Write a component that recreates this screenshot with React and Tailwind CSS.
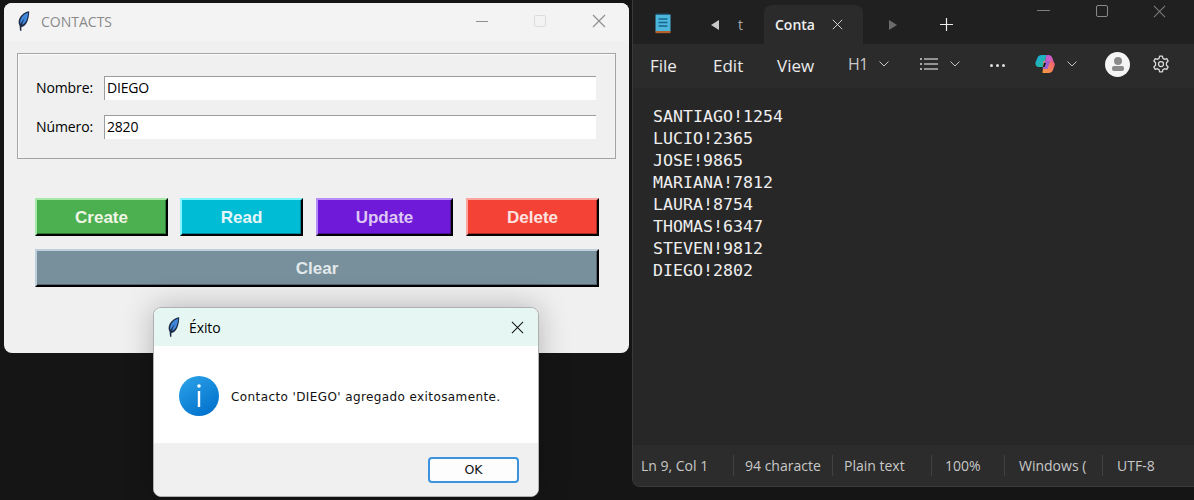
import { useState } from "react";

const ui = "font-['Open_Sans','Noto_Sans',sans-serif]";

function Feather({ className }) {
  return (
    <svg className={className} viewBox="0 0 12 20" width="12" height="20">
      <path d="M11.2 0.2 C7.4 0.6 3.2 3.6 1.4 7.6 C0.4 10 0.2 12.6 1.6 14.8 L2 19.8 L3.4 19.8 L3.4 16 C6 15.6 8.2 13.4 9.4 10.4 C10.6 7.4 11.3 3.6 11.2 0.2 Z" fill="#1c2a44" />
      <path d="M10.2 1.6 C7.4 2.4 4.2 4.8 2.8 8 C2 10 1.9 11.6 2.4 13 L6.8 6.6 L3.8 13.8 C5.8 13.4 7.5 11.6 8.5 9.2 C9.5 6.8 10.1 4 10.2 1.6 Z" fill="#4088de" />
    </svg>
  );
}

function CloseIcon({ size = 14, color = "#000", width = 1.1, className = "" }) {
  return (
    <svg className={className} viewBox="0 0 14 14" width={size} height={size} fill="none" stroke={color} strokeWidth={width}>
      <path d="M1 1 L13 13 M13 1 L1 13" />
    </svg>
  );
}

function Chevron({ className = "" }) {
  return (
    <svg className={className} viewBox="0 0 10 6" width="10" height="6" fill="none" stroke="#c4c4c4" strokeWidth="1">
      <path d="M0.5 0.5 L5 5 L9.5 0.5" />
    </svg>
  );
}

function BevelButton({ label, className }) {
  return (
    <button className={`h-[38px] pt-[1px] border-2 border-r-black border-b-black font-['Liberation_Sans',Arial,sans-serif] font-bold text-[17px] ${className}`}>
      {label}
    </button>
  );
}

function ContactsWindow() {
  const [nombre, setNombre] = useState("DIEGO");
  const [numero, setNumero] = useState("2820");

  return (
    <div className={`absolute left-[4px] top-[3px] w-[625px] h-[350px] rounded-lg bg-[#f0f0f0] overflow-hidden ${ui}`}>
      <div className="h-[38px] bg-[#f3f3f3] flex items-center pl-[14px] pb-[2px]">
        <Feather />
        <span className="ml-[11px] text-[14px] text-[#8a8a8a]">CONTACTS</span>
        <div className="ml-auto flex items-center">
          <div className="w-[12px] h-px bg-[#8f8f8f] mr-[46px]"></div>
          <div className="w-[12px] h-[12px] rounded-[2px] border border-[#dcdcdc] mr-[46px]"></div>
          <CloseIcon size={14} color="#8c8c8c" className="mr-[23px]" />
        </div>
      </div>

      <div className="px-[13px] pt-[12px]">
        <div className="w-[599px] h-[106px] border border-[#a4a4a4] shadow-[inset_1px_1px_0_#fbfbfb] pl-[18px] pr-[19px] pt-[22px] flex flex-col gap-[15px]">
          <div className="flex items-center h-[24px]">
            <label className="w-[68px] pb-[2px] text-[14px] text-[#000] tracking-[-0.1px]">Nombre:</label>
            <input
              className="flex-1 min-w-0 h-[24px] pb-[2px] bg-white border-t border-l border-t-[#9c9c9c] border-l-[#9c9c9c] pl-[2px] text-[14px] text-[#000] tracking-[-0.2px] outline-none"
              value={nombre}
              onChange={(e) => setNombre(e.target.value)}
            />
          </div>
          <div className="flex items-center h-[24px]">
            <label className="w-[68px] pb-[2px] text-[14px] text-[#000] tracking-[-0.1px]">Número:</label>
            <input
              className="flex-1 min-w-0 h-[24px] pb-[2px] bg-white border-t border-l border-t-[#9c9c9c] border-l-[#9c9c9c] pl-[2px] text-[14px] text-[#000] tracking-[-0.2px] outline-none"
              value={numero}
              onChange={(e) => setNumero(e.target.value)}
            />
          </div>
        </div>

        <div className="mt-[39px] ml-[18px] w-[564px]">
          <div className="flex">
            <BevelButton label="Create" className="w-[133px] bg-[#4caf50] text-[#f1f5e6] border-t-[#a5e8a7] border-l-[#a5e8a7] shadow-[inset_-1px_-1px_0_#2f7a33]" />
            <BevelButton label="Read" className="w-[123px] ml-[12px] bg-[#00bcd4] text-[#e6f6f8] border-t-[#80f4ff] border-l-[#80f4ff] shadow-[inset_-1px_-1px_0_#00829a]" />
            <BevelButton label="Update" className="w-[137px] ml-[13px] bg-[#6f1ad8] text-[#dcc8f5] border-t-[#b88cf8] border-l-[#b88cf8] shadow-[inset_-1px_-1px_0_#4b1296]" />
            <BevelButton label="Delete" className="w-[133px] ml-[13px] bg-[#f44336] text-[#fde4e0] border-t-[#fca59e] border-l-[#fca59e] shadow-[inset_-1px_-1px_0_#a82c22]" />
          </div>
          <BevelButton label="Clear" className="w-full mt-[13px] bg-[#78909c] text-[#e3e8ea] border-t-[#bfd0dc] border-l-[#bfd0dc] shadow-[inset_-1px_-1px_0_#52646d]" />
        </div>
      </div>
    </div>
  );
}

function InfoIcon() {
  return (
    <svg viewBox="0 0 40 40" width="40" height="40">
      <defs>
        <linearGradient id="infoFill" x1="0.2" y1="0" x2="0.8" y2="1">
          <stop offset="0" stopColor="#2aa0e6" />
          <stop offset="1" stopColor="#0070cc" />
        </linearGradient>
      </defs>
      <circle cx="20" cy="20" r="20" fill="url(#infoFill)" />
      <circle cx="20" cy="10" r="1.8" fill="#fff" />
      <rect x="18.8" y="15" width="2.4" height="16" fill="#fff" />
    </svg>
  );
}

function ExitoDialog() {
  return (
    <div className={`absolute left-[153px] top-[307px] w-[386px] h-[190px] rounded-lg border border-[#b0b0b0] overflow-hidden bg-white shadow-[0_0_30px_rgba(0,0,0,0.25)] ${ui} flex flex-col`}>
      <div className="h-[38px] bg-[#e6f7f3] flex items-center pl-[14px] shrink-0">
        <Feather />
        <span className="ml-[9px] text-[14px] text-[#000] tracking-[-0.1px]">Éxito</span>
        <CloseIcon size={13} color="#111" className="ml-auto mr-[14px]" />
      </div>
      <div className="h-[97px] flex items-center pl-[25px] pt-[2px] shrink-0">
        <InfoIcon />
        <span className="ml-[12px] mt-[3px] font-['DejaVu_Sans',sans-serif] text-[12px] tracking-[0.4px] text-[#111]">
          Contacto 'DIEGO' agregado exitosamente.
        </span>
      </div>
      <div className="flex-1 bg-[#f0f0f0] flex justify-end pt-[14px] pr-[19px]">
        <button className="w-[91px] h-[26px] rounded-[4px] bg-[#fdfdfd] border-2 border-[#3a93dc] font-['DejaVu_Sans',sans-serif] text-[12.5px] text-[#111]">
          OK
        </button>
      </div>
    </div>
  );
}

function NotepadIcon() {
  return (
    <svg viewBox="0 0 16 21" width="16" height="21">
      <rect x="0.5" y="1.5" width="15" height="17" fill="#4cb6dd" />
      <rect x="0.5" y="18" width="15" height="2.2" fill="#b4622a" />
      <path d="M2 1 H14" stroke="#155b7d" strokeWidth="1.4" strokeDasharray="1.2 1.2" />
      <path d="M3.5 6 H12.5 M3.5 9.5 H12.5 M3.5 13 H12.5" stroke="#17658a" strokeWidth="1.6" />
    </svg>
  );
}

function CopilotIcon() {
  return (
    <svg viewBox="0 0 20 20" width="20" height="20">
      <defs>
        <linearGradient id="copA" x1="0" y1="0" x2="1" y2="1">
          <stop offset="0" stopColor="#1aa8e8" />
          <stop offset="1" stopColor="#28c08a" />
        </linearGradient>
        <linearGradient id="copB" x1="0" y1="0" x2="1" y2="1">
          <stop offset="0" stopColor="#b45be0" />
          <stop offset="1" stopColor="#f0609a" />
        </linearGradient>
        <linearGradient id="copC" x1="0" y1="1" x2="1" y2="0">
          <stop offset="0" stopColor="#f9a03c" />
          <stop offset="1" stopColor="#ef5a7a" />
        </linearGradient>
      </defs>
      <path d="M6.5 1 H11.5 L8.5 13 H4 C1.5 13 0 11 0.5 8.5 L2.5 3.5 C3 2 4.8 1 6.5 1 Z" fill="url(#copA)" />
      <path d="M8.5 7 H16 C18.5 7 20.3 9 19.6 11.5 L18 16 C17.5 18 15.5 19 13.5 19 H7.5 Z" fill="url(#copC)" />
      <path d="M11.5 1 H13.5 C15.5 1 17 2.5 17.4 4 L19.5 10.5 C19 8 17 7 15.5 7 H10 Z" fill="url(#copB)" />
      <path d="M10 7 H15 L12.5 15 H8 Z" fill="#8a5ce8" opacity="0.85" />
      <path d="M9 9 H11 L9.5 13 H8 Z" fill="#111" />
    </svg>
  );
}

function GearIcon() {
  return (
    <svg viewBox="0 0 24 24" width="20" height="20" fill="none" stroke="#dcdcdc" strokeWidth="1.5" strokeLinejoin="round">
      <path d="M10.3 2.5 H13.7 L14.3 5.3 C15 5.6 15.6 5.9 16.2 6.4 L18.9 5.5 L20.6 8.5 L18.5 10.4 C18.6 11.2 18.6 12.8 18.5 13.6 L20.6 15.5 L18.9 18.5 L16.2 17.6 C15.6 18.1 15 18.4 14.3 18.7 L13.7 21.5 H10.3 L9.7 18.7 C9 18.4 8.4 18.1 7.8 17.6 L5.1 18.5 L3.4 15.5 L5.5 13.6 C5.4 12.8 5.4 11.2 5.5 10.4 L3.4 8.5 L5.1 5.5 L7.8 6.4 C8.4 5.9 9 5.6 9.7 5.3 Z" />
      <circle cx="12" cy="12" r="3" />
    </svg>
  );
}

function NotepadWindow() {
  const lines = ["SANTIAGO!1254", "LUCIO!2365", "JOSE!9865", "MARIANA!7812", "LAURA!8754", "THOMAS!6347", "STEVEN!9812", "DIEGO!2802"];

  return (
    <div className={`absolute left-[632px] top-0 w-[562px] h-[487px] bg-[#272727] border-l border-b border-[#3a3a3a] rounded-bl-lg overflow-hidden flex flex-col ${ui}`}>
      {/* tabs */}
      <div className="h-[44px] bg-[#202020] shrink-0 relative">
        <div className="absolute left-[22px] top-[13px]"><NotepadIcon /></div>
        <svg className="absolute left-[78px] top-[20px]" viewBox="0 0 8 10" width="8" height="10" fill="#c9c9c9"><path d="M8 0 V10 L0 5 Z" /></svg>
        <span className="absolute left-[105px] top-[14px] text-[14px] text-[#a8a8a8]">t</span>
        <div className="absolute left-[131px] top-[5px] w-[99px] h-[39px] bg-[#2b2b2b] rounded-t-lg flex items-center pl-[11px]">
          <span className="w-[38px] text-[14px] font-semibold text-[#efefef]">Conta</span>
          <CloseIcon size={11} color="#e8e8e8" className="ml-[19px]" />
        </div>
        <svg className="absolute left-[256px] top-[20px]" viewBox="0 0 8 10" width="8" height="10" fill="#6c6c6c"><path d="M0 0 V10 L8 5 Z" /></svg>
        <svg className="absolute left-[307px] top-[18px]" viewBox="0 0 13 13" width="13" height="13" stroke="#ececec" strokeWidth="1.2"><path d="M6.5 0 V13 M0 6.5 H13" /></svg>
        <div className="absolute left-[404px] top-[10px] w-[13px] h-px bg-[#7d7d7d]"></div>
        <div className="absolute left-[463px] top-[5px] w-[12px] h-[12px] rounded-[2px] border border-[#8a8a8a]"></div>
        <CloseIcon size={13} color="#7d7d7d" className="absolute left-[520px] top-[5px]" />
      </div>

      {/* toolbar */}
      <div className="h-[44px] bg-[#2b2b2b] flex items-center shrink-0 text-[17px] text-[#ececec]">
        <span className="ml-[17px] w-[63px]">File</span>
        <span className="w-[64px]">Edit</span>
        <span className="w-[71px]">View</span>
        <div className="flex items-center pb-[4px]">
          <span className="w-[31px] text-[16px] text-[#c9c9c9] tracking-[-0.5px]">H1</span>
          <Chevron />
          <svg className="ml-[31px]" viewBox="0 0 18 12" width="18" height="12" fill="#d8d8d8">
            <circle cx="1" cy="1" r="1" /><circle cx="1" cy="6" r="1" /><circle cx="1" cy="11" r="1" />
            <rect x="4" y="0.4" width="14" height="1.2" /><rect x="4" y="5.4" width="14" height="1.2" /><rect x="4" y="10.4" width="14" height="1.2" />
          </svg>
          <Chevron className="ml-[12px]" />
          <div className="ml-[30px] mt-[2px] flex gap-[3px]">
            <div className="w-[3px] h-[3px] rounded-full bg-[#e0e0e0]"></div>
            <div className="w-[3px] h-[3px] rounded-full bg-[#e0e0e0]"></div>
            <div className="w-[3px] h-[3px] rounded-full bg-[#e0e0e0]"></div>
          </div>
          <div className="ml-[30px]"><CopilotIcon /></div>
          <Chevron className="ml-[12px]" />
          <div className="ml-[28px] w-[25px] h-[25px] rounded-full bg-[#f5f5f5] flex flex-col items-center justify-center gap-[1px]">
            <div className="w-[8px] h-[8px] rounded-full bg-[#8a8a8a]"></div>
            <div className="w-[12px] h-[5px] rounded-[2px] bg-[#8a8a8a]"></div>
          </div>
          <div className="ml-[21px]"><GearIcon /></div>
        </div>
      </div>

      {/* text */}
      <div className="flex-1 pl-[20px] pt-[18px] font-['DejaVu_Sans_Mono',monospace] text-[16.6px] leading-[22px] text-[#efefef]">
        {lines.map((line) => (
          <div key={line}>{line}</div>
        ))}
      </div>

      {/* status */}
      <div className="h-[41px] bg-[#2c2c2c] flex items-center shrink-0 text-[14px] text-[#c8c8c8]">
        <div className="w-[100px] pl-[8px]">Ln 9, Col 1</div>
        <div className="w-[99px] pl-[11px] border-l border-[#414141] whitespace-nowrap">94 characte</div>
        <div className="w-[99px] pl-[11px] border-l border-[#414141]">Plain text</div>
        <div className="w-[73px] pl-[13px] border-l border-[#414141]">100%</div>
        <div className="w-[98px] pl-[14px] border-l border-[#414141] whitespace-nowrap">Windows (</div>
        <div className="pl-[14px] border-l border-[#414141]">UTF-8</div>
      </div>
    </div>
  );
}

export default function App() {
  return (
    <div className="relative w-[1194px] h-[500px] bg-[#151515] overflow-hidden">
      <ContactsWindow />
      <NotepadWindow />
      <ExitoDialog />
    </div>
  );
}
